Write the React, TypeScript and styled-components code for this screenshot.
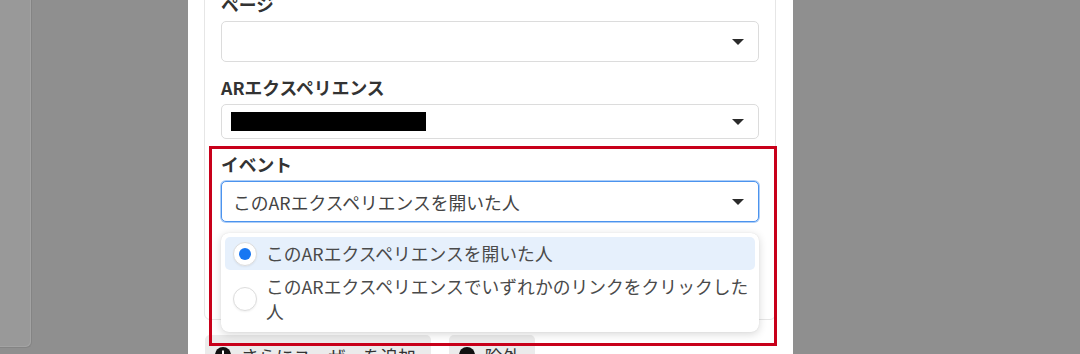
import styled, { createGlobalStyle } from 'styled-components';

const GlobalStyle = createGlobalStyle`
  html, body {
    margin: 0;
    padding: 0;
    background: #8f8f8f;
    overflow: hidden;
  }
  body {
    font-family: "Noto Sans CJK JP", "Noto Sans", sans-serif;
  }
`;

const Page = styled.div`
  display: flex;
  align-items: flex-start;
  height: 354px;
  overflow: hidden;
`;

const BackCard = styled.div`
  width: 31px;
  height: 347px;
  background: #999999;
  border-right: 1px solid #848484;
  border-bottom: 1px solid #848484;
  border-bottom-right-radius: 6px;
  box-shadow: inset -1px -1px 0 #a3a3a3;
`;

const Modal = styled.div`
  position: relative;
  margin-left: 156px;
  width: 605px;
  height: 354px;
  background: #ffffff;
  box-sizing: border-box;
  padding: 0 17px 0 16px;
  overflow: hidden;
`;

const Content = styled.div`
  margin-top: -22px;
`;

const Card = styled.div`
  border: 1px solid #e6e6e6;
  border-radius: 6px;
  padding: 0 16px 97px;
`;

const Label = styled.div`
  margin: 13px 0 5px;
  font-size: 17.8px;
  line-height: 24px;
  font-weight: 700;
  color: #333333;
`;

const Field = styled.div`
  position: relative;
`;

const Select = styled.div<{ $height: number; $focused?: boolean }>`
  display: flex;
  align-items: center;
  justify-content: space-between;
  box-sizing: border-box;
  height: ${(p) => p.$height}px;
  padding: 0 14px 0 11px;
  background: #ffffff;
  border: 1px solid ${(p) => (p.$focused ? '#4b93ee' : '#dcdcdc')};
  border-radius: 5px;
  box-shadow: ${(p) => (p.$focused ? '0 0 0 1px rgba(75,147,238,0.45)' : 'none')};
  font-size: 17.8px;
  color: #444444;
`;

const Redacted = styled.div`
  width: 195px;
  height: 19px;
  margin-left: -2px;
  background: #000000;
`;

const Caret = styled.span`
  width: 0;
  height: 0;
  border-left: 6px solid transparent;
  border-right: 6px solid transparent;
  border-top: 6px solid #2b2b2b;
  margin-left: auto;
`;

const Menu = styled.div`
  position: absolute;
  top: calc(100% + 11px);
  left: 0;
  right: 0;
  padding: 4px;
  background: #ffffff;
  border-radius: 8px;
  box-shadow: 0 2px 8px rgba(0, 0, 0, 0.16), 0 0 1px rgba(0, 0, 0, 0.12);
  z-index: 2;
`;

const Option = styled.div<{ $selected?: boolean }>`
  display: flex;
  align-items: center;
  gap: 9px;
  padding: 4px 2px 4px 8px;
  border-radius: 5px;
  background: ${(p) => (p.$selected ? '#e6f0fc' : 'transparent')};
  font-size: 17.8px;
  line-height: 25px;
  color: #4a4a4a;
`;

const Radio = styled.span<{ $checked?: boolean }>`
  flex: none;
  position: relative;
  width: 24px;
  height: 24px;
  box-sizing: border-box;
  border-radius: 50%;
  background: #ffffff;
  border: 1px solid #dddddd;
  box-shadow: 0 1px 2px rgba(0, 0, 0, 0.06);

  &::after {
    content: '';
    display: ${(p) => (p.$checked ? 'block' : 'none')};
    position: absolute;
    top: 5px;
    left: 5px;
    width: 12px;
    height: 12px;
    border-radius: 50%;
    background: #1877f2;
  }
`;

const ButtonRow = styled.div`
  display: flex;
  gap: 18px;
  margin: 15px 0 0 1px;
`;

const Button = styled.div`
  display: flex;
  align-items: center;
  gap: 10px;
  height: 40px;
  padding: 0 15px 0 10px;
  background: #ebebeb;
  border-radius: 5px;
  font-size: 17.5px;
  color: #333333;
`;

const Highlight = styled.div`
  position: absolute;
  left: 21px;
  top: 146px;
  width: 568px;
  height: 200px;
  box-sizing: border-box;
  border: 3px solid #c8001a;
  pointer-events: none;
  z-index: 3;
`;

function CircleIcon({ minus }: { minus?: boolean }) {
  return (
    <svg width="16" height="16" viewBox="0 0 16 16">
      <circle cx="8" cy="8" r="8" fill="#111" />
      <rect x="3.5" y="7" width="9" height="2" fill="#fff" />
      {!minus && <rect x="7" y="3.5" width="2" height="9" fill="#fff" />}
    </svg>
  );
}

export default function App() {
  return (
    <>
      <GlobalStyle />
      <Page>
        <BackCard />
        <Modal>
          <Content>
            <Card>
              <Label>ページ</Label>
              <Select $height={41}>
                <Caret />
              </Select>

              <Label>ARエクスペリエンス</Label>
              <Select $height={35}>
                <Redacted />
                <Caret />
              </Select>

              <Label>イベント</Label>
              <Field>
                <Select $height={41} $focused>
                  <span>このARエクスペリエンスを開いた人</span>
                  <Caret />
                </Select>
                <Menu>
                  <Option $selected>
                    <Radio $checked />
                    <span>このARエクスペリエンスを開いた人</span>
                  </Option>
                  <Option>
                    <Radio />
                    <span>このARエクスペリエンスでいずれかのリンクをクリックした人</span>
                  </Option>
                </Menu>
              </Field>
            </Card>

            <ButtonRow>
              <Button>
                <CircleIcon />
                さらにユーザーを追加
              </Button>
              <Button>
                <CircleIcon minus />
                除外
              </Button>
            </ButtonRow>
          </Content>
          <Highlight />
        </Modal>
      </Page>
    </>
  );
}
